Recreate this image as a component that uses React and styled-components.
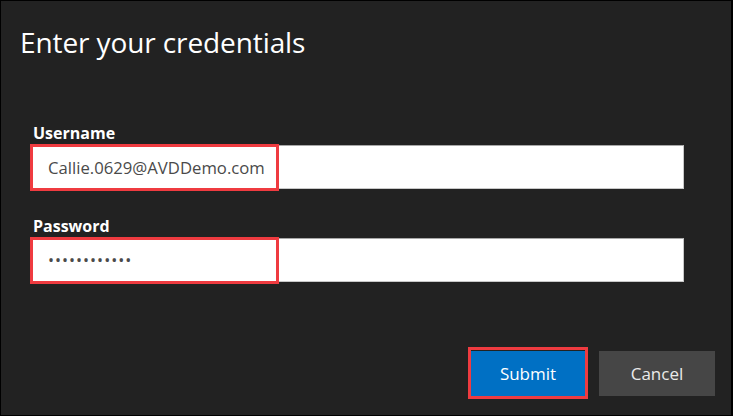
import React from 'react'
import styled, { createGlobalStyle } from 'styled-components'

const GlobalStyle = createGlobalStyle`
  html, body {
    margin: 0;
    padding: 0;
    background: #222222;
  }
  * {
    box-sizing: border-box;
  }
`

const Window = styled.div`
  width: 733px;
  height: 416px;
  display: flex;
  flex-direction: column;
  background: #222222;
  border: 1px solid #000;
  border-right-width: 2px;
  font-family: 'Open Sans', 'Noto Sans', sans-serif;
  color: #fff;
`

const Title = styled.h1`
  margin: 0;
  padding: 22px 0 0 19px;
  font-size: 28px;
  line-height: 38px;
  font-weight: 400;
  letter-spacing: -0.1px;
`

const Form = styled.form`
  display: flex;
  flex-direction: column;
  gap: 27px;
  margin-top: 62px;
  padding: 0 47px 0 29px;
`

const Field = styled.div`
  display: flex;
  flex-direction: column;
`

const Label = styled.label`
  font-size: 16px;
  line-height: 21px;
  font-weight: 700;
  padding-left: 3px;
  margin-bottom: 1px;
`

const InputWrap = styled.div`
  position: relative;
  padding-left: 1px;
`

const Input = styled.input`
  display: block;
  width: 100%;
  height: 44px;
  padding: 0 16px;
  border: 1px solid #c8c8c8;
  border-top-color: #a8a8a8;
  background: #fff;
  color: #4a4a4a;
  font-family: inherit;
  font-size: ${({ $secret }) => ($secret ? '16px' : '16.7px')};
  outline: none;
  letter-spacing: ${({ $secret }) => ($secret ? '1px' : '0')};
`

const Highlight = styled.div`
  position: absolute;
  top: -1px;
  left: 0;
  width: ${({ $width }) => $width}px;
  bottom: -2px;
  border: 3px solid #ef3b40;
  pointer-events: none;
`

const Footer = styled.div`
  margin-top: auto;
  display: flex;
  justify-content: flex-end;
  gap: 13px;
  padding: 0 16px 19px 0;
`

const ButtonWrap = styled.div`
  position: relative;
`

const Button = styled.button`
  width: 116px;
  height: 45px;
  border: none;
  background: ${({ $primary }) => ($primary ? '#0070c4' : '#464646')};
  color: ${({ $primary }) => ($primary ? '#fff' : '#eaeaea')};
  font-family: inherit;
  font-size: 17px;
  cursor: pointer;
`

const ButtonHighlight = styled.div`
  position: absolute;
  inset: -4px -2px -3px -2px;
  border: 3px solid #ef3b40;
  pointer-events: none;
`

const App = () => (
  <>
    <GlobalStyle />
    <Window>
      <Title>Enter your credentials</Title>
      <Form onSubmit={(e) => e.preventDefault()}>
        <Field>
          <Label htmlFor="user">Username</Label>
          <InputWrap>
            <Input id="user" readOnly value="Callie.0629@AVDDemo.com" />
            <Highlight $width={249} />
          </InputWrap>
        </Field>
        <Field>
          <Label htmlFor="pass">Password</Label>
          <InputWrap>
            <Input id="pass" type="password" readOnly value="xxxxxxxxxxxx" $secret />
            <Highlight $width={249} />
          </InputWrap>
        </Field>
      </Form>
      <Footer>
        <ButtonWrap>
          <Button type="button" $primary>Submit</Button>
          <ButtonHighlight />
        </ButtonWrap>
        <Button type="button">Cancel</Button>
      </Footer>
    </Window>
  </>
)

export default App
